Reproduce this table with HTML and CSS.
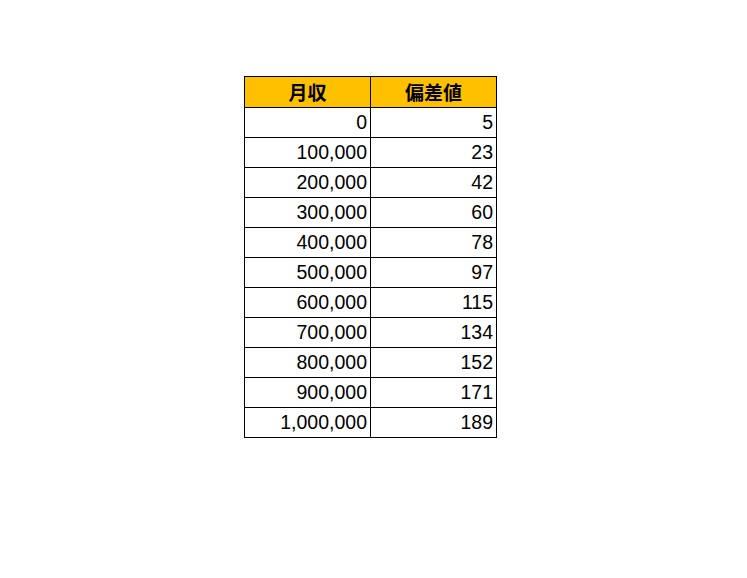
FILE: index.html
```html
<!DOCTYPE html>
<html lang="ja">
<head>
<meta charset="utf-8">
<link rel="stylesheet" href="styles.css">
</head>
<body>
<div class="page">
<table class="sheet">
<thead>
<tr><th>月収</th><th>偏差値</th></tr>
</thead>
<tbody>
<tr><td>0</td><td>5</td></tr>
<tr><td>100,000</td><td>23</td></tr>
<tr><td>200,000</td><td>42</td></tr>
<tr><td>300,000</td><td>60</td></tr>
<tr><td>400,000</td><td>78</td></tr>
<tr><td>500,000</td><td>97</td></tr>
<tr><td>600,000</td><td>115</td></tr>
<tr><td>700,000</td><td>134</td></tr>
<tr><td>800,000</td><td>152</td></tr>
<tr><td>900,000</td><td>171</td></tr>
<tr><td>1,000,000</td><td>189</td></tr>
</tbody>
</table>
</div>
</body>
</html>
```
FILE: styles.css
```css
html, body {
  margin: 0;
  padding: 0;
  background: #ffffff;
}
.page {
  padding: 76px 0 0 244px;
}
.sheet {
  border-collapse: collapse;
  font-family: "Liberation Sans", Arial, "Noto Sans CJK JP", sans-serif;
  font-size: 19.5px;
  color: #000;
}
.sheet th, .sheet td {
  border: 1px solid #000;
  height: 29px;
  box-sizing: content-box;
  line-height: 29px;
}
.sheet th {
  background: #ffc000;
  font-family: "Noto Sans CJK JP", sans-serif;
  font-size: 19px;
  font-weight: bold;
  text-align: center;
  padding: 0;
  width: 125px;
  height: 30px;
  line-height: 30px;
}
.sheet td {
  text-align: right;
  padding: 0 3px 0 0;
  width: 122px;
}
```
